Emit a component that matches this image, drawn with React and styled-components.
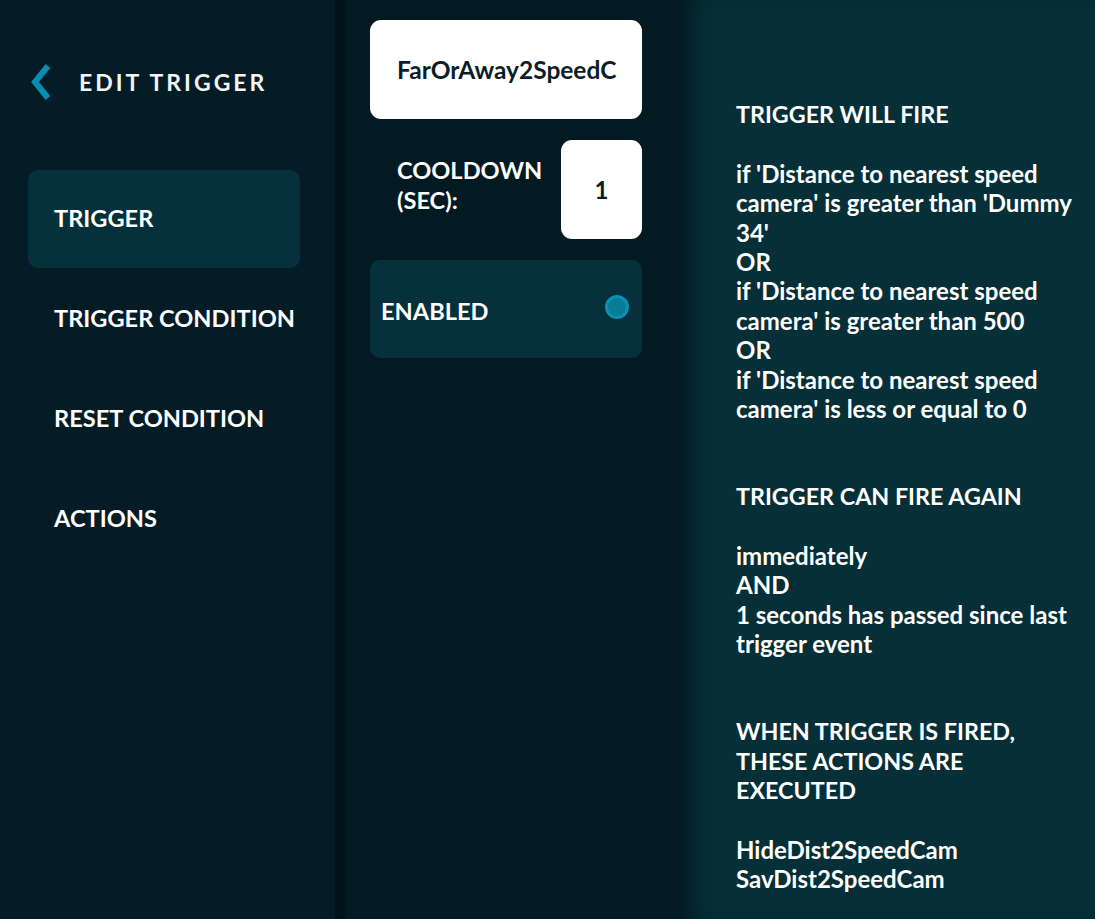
import React from 'react'
import styled, { createGlobalStyle } from 'styled-components'

const GlobalStyle = createGlobalStyle`
  html, body {
    margin: 0;
    padding: 0;
    background: #041b25;
    font-family: Lato, "Open Sans", sans-serif;
    color: #ffffff;
  }
`

const Page = styled.div`
  display: flex;
  width: 100%;
  height: 919px;
  overflow: hidden;
`

const Sidebar = styled.div`
  width: 335px;
  flex-shrink: 0;
  background: #041c26;
  display: flex;
  flex-direction: column;
  padding: 0 0 0 28px;
  box-sizing: border-box;
`

const Header = styled.div`
  display: flex;
  align-items: center;
  height: 170px;
  padding-left: 2px;
  padding-bottom: 6px;
  box-sizing: border-box;
`

const BackIcon = styled.svg`
  width: 22px;
  height: 38px;
  margin-right: 27px;
`

const Title = styled.h1`
  margin: 0;
  font-size: 23px;
  font-weight: 700;
  letter-spacing: 3px;
  color: #f2f4f5;
`

const NavItem = styled.div`
  width: 272px;
  height: 98px;
  margin-bottom: 2px;
  display: flex;
  align-items: center;
  padding-left: 26px;
  padding-bottom: 2px;
  box-sizing: border-box;
  border-radius: 10px;
  font-size: 23.6px;
  font-weight: 700;
  white-space: nowrap;
  background: ${p => (p.active ? '#06303c' : 'transparent')};
`

const Middle = styled.div`
  width: 345px;
  flex-shrink: 0;
  background: #031a22;
  border-left: 10px solid #02131a;
  box-sizing: border-box;
  padding: 20px 0 0 25px;
  display: flex;
  flex-direction: column;
  gap: 21px;
`

const NameInput = styled.div`
  width: 272px;
  height: 99px;
  background: #ffffff;
  border-radius: 11px;
  display: flex;
  align-items: center;
  padding-left: 27px;
  box-sizing: border-box;
  color: #0b1d27;
  font-size: 24.5px;
  font-weight: 700;
  overflow: hidden;
  white-space: nowrap;
`

const CooldownRow = styled.div`
  width: 272px;
  display: flex;
  align-items: center;
  justify-content: space-between;
`

const CooldownLabel = styled.div`
  padding-left: 27px;
  font-size: 23.6px;
  font-weight: 700;
  line-height: 30px;
  margin-top: -10px;
`

const NumberInput = styled.div`
  width: 81px;
  height: 99px;
  background: #ffffff;
  border-radius: 11px;
  display: flex;
  align-items: center;
  justify-content: center;
  color: #0b1d27;
  font-size: 24px;
  font-weight: 700;
`

const ToggleCard = styled.div`
  width: 272px;
  height: 98px;
  border-radius: 10px;
  background: #06303c;
  display: flex;
  align-items: center;
  justify-content: space-between;
  padding: 4px 13px 0 11px;
  box-sizing: border-box;
  font-size: 23.6px;
  font-weight: 700;
`

const Radio = styled.span`
  width: 18px;
  height: 18px;
  border-radius: 50%;
  background: #077d97;
  border: 3px solid #0b90b1;
  margin-bottom: 8px;
`

const Summary = styled.div`
  flex: 1;
  background: #062f37;
  box-shadow: inset 22px 0 20px -10px #031a21;
  padding: 100px 0 0 56px;
  box-sizing: border-box;
`

const Block = styled.div`
  width: 340px;
  font-size: 24px;
  font-weight: 700;
  line-height: 29.4px;
  margin-bottom: 58.8px;
`

const Heading = styled.div`
  font-size: 23.3px;
  margin-bottom: 29.4px;
`

export default function App() {
  return (
    <>
      <GlobalStyle />
      <Page>
        <Sidebar>
          <Header>
            <BackIcon viewBox="0 0 22 38">
              <path d="M18 3 L5 19 L18 35" fill="none" stroke="#0a8db0" strokeWidth="6" strokeLinejoin="miter" />
            </BackIcon>
            <Title>EDIT TRIGGER</Title>
          </Header>
          <NavItem active>TRIGGER</NavItem>
          <NavItem>TRIGGER CONDITION</NavItem>
          <NavItem>RESET CONDITION</NavItem>
          <NavItem>ACTIONS</NavItem>
        </Sidebar>
        <Middle>
          <NameInput>FarOrAway2SpeedC</NameInput>
          <CooldownRow>
            <CooldownLabel>
              COOLDOWN
              <br />
              (SEC):
            </CooldownLabel>
            <NumberInput>1</NumberInput>
          </CooldownRow>
          <ToggleCard>
            ENABLED
            <Radio />
          </ToggleCard>
        </Middle>
        <Summary>
          <Block>
            <Heading>TRIGGER WILL FIRE</Heading>
            <div>if 'Distance to nearest speed camera' is greater than 'Dummy 34'</div>
            <div>OR</div>
            <div>if 'Distance to nearest speed camera' is greater than 500</div>
            <div>OR</div>
            <div>if 'Distance to nearest speed camera' is less or equal to 0</div>
          </Block>
          <Block>
            <Heading>TRIGGER CAN FIRE AGAIN</Heading>
            <div>immediately</div>
            <div>AND</div>
            <div>1 seconds has passed since last trigger event</div>
          </Block>
          <Block>
            <Heading>WHEN TRIGGER IS FIRED, THESE ACTIONS ARE EXECUTED</Heading>
            <div>HideDist2SpeedCam</div>
            <div>SavDist2SpeedCam</div>
          </Block>
        </Summary>
      </Page>
    </>
  )
}
